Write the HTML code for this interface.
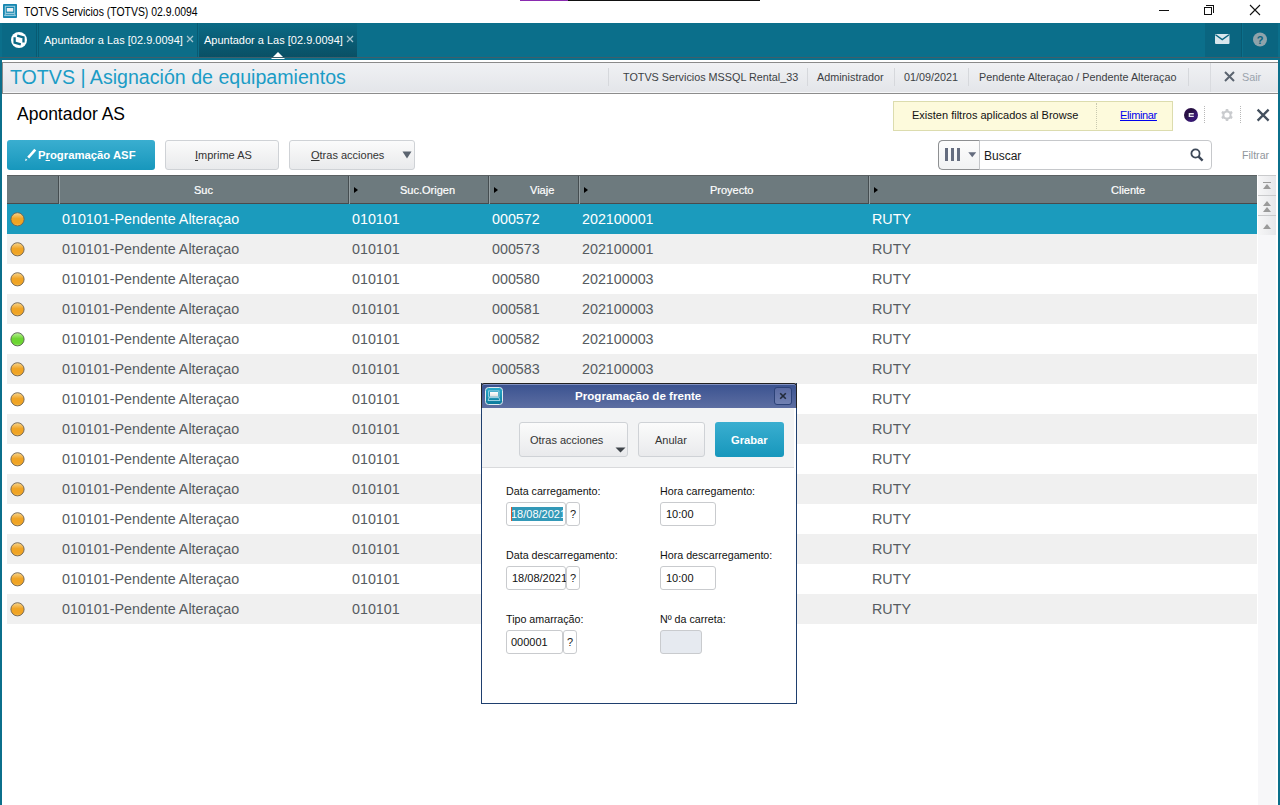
<!DOCTYPE html>
<html><head><meta charset="utf-8">
<style>
*{margin:0;padding:0;box-sizing:border-box}
html,body{width:1280px;height:805px;overflow:hidden;background:#fff;font-family:"Liberation Sans",sans-serif;position:relative}
.a{position:absolute}
.t{position:absolute;white-space:nowrap;line-height:1}
.sep{position:absolute;top:68px;width:1px;height:18px;background:#d6d8dc}
.row{position:absolute;left:7px;width:1250px;height:30px}
.rt{position:absolute;white-space:nowrap;line-height:1;font-size:14.3px;color:#565b60;top:8px}
.sel .rt{color:#fff}
.dot{position:absolute;left:3px;top:8px;width:15px;height:15px}
.hd{position:absolute;top:0;height:28px;border-left:1px solid #4f5a5e;box-shadow:inset 1px 0 0 #8a9599}
.ht{position:absolute;white-space:nowrap;line-height:1;font-size:11px;color:#fff;top:185px;-webkit-text-stroke:0.2px #fff}
.arr{position:absolute;top:187px;width:0;height:0;border-top:3.5px solid transparent;border-bottom:3.5px solid transparent;border-left:4.5px solid #000}
.btn{position:absolute;border:1px solid #cfd2d6;border-radius:3px;background:linear-gradient(#fbfbfb,#e9eaec)}
.lbl{position:absolute;white-space:nowrap;line-height:1;font-size:10.7px;color:#111}
.inp{position:absolute;height:24px;border:1px solid #c9cbce;border-radius:3px;background:#fff}
.q{position:absolute;height:24px;width:14px;border:1px solid #c9cbce;border-radius:3px;background:#fff;font-size:11px;line-height:23px;text-align:center;color:#222}
</style></head><body>

<div class="a" style="left:520px;top:0;width:48px;height:1px;background:#8a2bb0"></div>
<div class="a" style="left:568px;top:0;width:192px;height:1px;background:#111"></div>
<svg class="a" style="left:3px;top:4px" width="14" height="14"><rect x="0" y="0" width="14" height="14" rx="0.8" fill="#1787b0"/><rect x="2.3" y="2.3" width="9.4" height="7" fill="none" stroke="#9fcfe2" stroke-width="1"/><rect x="3.8" y="4" width="6.4" height="3.6" fill="#eef0f2"/><path d="M1.5 11.6 L2.6 9.8 H11.4 L12.5 11.6 Z" fill="none" stroke="#9fcfe2" stroke-width="1"/></svg>
<div class="t" style="left:24px;top:6px;font-size:12px;color:#000;transform:scaleX(0.87);transform-origin:0 0">TOTVS Servicios (TOTVS) 02.9.0094</div>
<div class="a" style="left:1159px;top:10px;width:10px;height:1px;background:#111"></div>
<div class="a" style="left:1204px;top:7px;width:8px;height:8px;border:1px solid #111;background:#fff"></div>
<div class="a" style="left:1206px;top:5px;width:8px;height:8px;border-top:1px solid #111;border-right:1px solid #111"></div>
<svg class="a" style="left:1249px;top:4px" width="12" height="12"><path d="M1 1L11 11M11 1L1 11" stroke="#111" stroke-width="1.1"/></svg>
<div class="a" style="left:0;top:23px;width:1280px;height:38px;background:#0b6f8b"></div>
<div class="a" style="left:0;top:23px;width:2px;height:782px;background:#0b6f8b"></div>
<div class="a" style="left:1278px;top:23px;width:2px;height:782px;background:#0b6f8b"></div>
<div class="a" style="left:2px;top:23px;width:35px;height:34px;background:#0a6985;border-right:1px solid #085a72"></div>
<svg class="a" style="left:0;top:0" width="40" height="60"><circle cx="19" cy="40" r="8" fill="#fff"/><path d="M14.6 37.3 L14.6 42.6 L20.8 44.3" fill="none" stroke="#0a6985" stroke-width="2.3"/><path d="M17.2 35.6 L23.5 37.3 L23.5 42.4" fill="none" stroke="#0a6985" stroke-width="2.3"/></svg>
<div class="a" style="left:38px;top:23px;width:160px;height:35px;background:#0c6d88;border-left:1px solid #085b73;border-right:1px solid #085b73;border-bottom:1px solid #085b73"></div>
<div class="t" style="left:44px;top:35px;font-size:11px;color:#fff">Apuntador a Las [02.9.0094]</div>
<svg class="a" style="left:186px;top:35px" width="8" height="8"><path d="M1 1L7 7M7 1L1 7" stroke="#a9c6d0" stroke-width="1.3"/></svg>
<div class="a" style="left:199px;top:23px;width:158px;height:35px;background:linear-gradient(#0b6a85,#094f64)"></div>
<div class="t" style="left:204px;top:35px;font-size:11px;color:#fff">Apuntador a Las [02.9.0094]</div>
<svg class="a" style="left:346px;top:35px" width="8" height="8"><path d="M1 1L7 7M7 1L1 7" stroke="#a9c6d0" stroke-width="1.3"/></svg>
<svg class="a" style="left:270px;top:51px" width="16" height="8"><path d="M1 8L8 1L15 8Z" fill="#fff"/></svg>
<div class="a" style="left:1205px;top:23px;width:37px;height:34px;background:#0a6580;border-right:1px solid #085a72"></div>
<div class="a" style="left:1243px;top:23px;width:35px;height:34px;background:#0a6580"></div>
<svg class="a" style="left:1215px;top:34px" width="16" height="12" viewBox="0 0 16 12"><rect x="0" y="0" width="14.5" height="10" rx="1" fill="#d9e6ec"/><path d="M0.5 0.8 L7.25 5.6 L14 0.8" fill="none" stroke="#0a6580" stroke-width="1.4"/></svg>
<svg class="a" style="left:1253px;top:32px" width="16" height="16" viewBox="0 0 16 16"><circle cx="7" cy="7.5" r="7" fill="#8fa3ab"/><text x="7" y="12" font-family="Liberation Sans" font-weight="bold" font-size="11" text-anchor="middle" fill="#0a6580">?</text></svg>
<div class="a" style="left:0;top:57px;width:1280px;height:1px;background:#3e5e6a"></div>
<div class="a" style="left:2px;top:60px;width:1276px;height:35px;background:#fff"></div>
<div class="a" style="left:2px;top:62px;width:1276px;height:32px;background:linear-gradient(#f0f1f4,#e3e5e9);border-top:1px solid #8a8a8a;border-left:1px solid #8a8a8a;border-bottom:1px solid #8c8c8c;box-shadow:inset 0 -1px 0 #f6f7f9"></div>
<div class="t" style="left:10px;top:68px;font-size:19.6px;color:#1b9cc6">TOTVS | Asignación de equipamientos</div>
<div class="a" style="left:1210px;top:63px;width:1px;height:29px;background:#d9dbdf"></div>
<div class="sep" style="left:608px"></div>
<div class="sep" style="left:807px"></div>
<div class="sep" style="left:894px"></div>
<div class="sep" style="left:968px"></div>
<div class="sep" style="left:1188px"></div>
<div class="t" style="left:623px;top:72px;font-size:10.8px;color:#3c3f44">TOTVS Servicios MSSQL Rental_33</div>
<div class="t" style="left:817px;top:72px;font-size:10.8px;color:#3c3f44">Administrador</div>
<div class="t" style="left:904px;top:72px;font-size:10.8px;color:#3c3f44">01/09/2021</div>
<div class="t" style="left:979px;top:72px;font-size:10.8px;color:#3c3f44">Pendente Alteraçao / Pendente Alteraçao</div>
<svg class="a" style="left:1224px;top:71px" width="11" height="11"><path d="M1 1L10 10M10 1L1 10" stroke="#5b6470" stroke-width="2"/></svg>
<div class="t" style="left:1242px;top:72px;font-size:10.8px;color:#9aa3ad">Sair</div>
<div class="t" style="left:17px;top:106px;font-size:17.5px;color:#000">Apontador AS</div>
<div class="a" style="left:893px;top:101px;width:280px;height:30px;background:#fdfadc;border:1px solid #dcdcae"></div>
<div class="a" style="left:1096px;top:103px;width:0;height:26px;border-left:1px dotted #c9c9b0"></div>
<div class="t" style="left:912px;top:110px;font-size:11px;color:#111">Existen filtros aplicados al Browse</div>
<div class="t" style="left:1120px;top:110px;font-size:11px;color:#0000ee;text-decoration:underline;letter-spacing:-0.35px">Eliminar</div>
<svg class="a" style="left:1183px;top:107px" width="16" height="16"><defs><linearGradient id="pg" x1="0" y1="0" x2="1" y2="1"><stop offset="0" stop-color="#3a0f5a"/><stop offset="0.35" stop-color="#24103e"/><stop offset="0.7" stop-color="#3a1878"/><stop offset="1" stop-color="#1a1050"/></linearGradient></defs><circle cx="8" cy="8" r="7" fill="url(#pg)"/><path d="M10.8 6.8H6.4V9.4H10.8" fill="none" stroke="#e8e8ec" stroke-width="1.4"/></svg>
<div class="a" style="left:1204px;top:106px;width:0;height:17px;border-left:1px dotted #b8b8b8"></div>
<div class="a" style="left:1240px;top:106px;width:0;height:17px;border-left:1px dotted #b8b8b8"></div>
<svg class="a" style="left:1220px;top:108px" width="14" height="14" viewBox="0 0 14 14"><g fill="#c9cbce"><circle cx="7" cy="7" r="4.6"/><rect x="5.6" y="1" width="2.8" height="12" rx="0.8"/><rect x="5.6" y="1" width="2.8" height="12" rx="0.8" transform="rotate(60 7 7)"/><rect x="5.6" y="1" width="2.8" height="12" rx="0.8" transform="rotate(-60 7 7)"/></g><circle cx="7" cy="7" r="2.6" fill="#fff"/></svg>
<svg class="a" style="left:1256px;top:108px" width="14" height="14"><path d="M1.6 1.6L12.6 12.6M12.6 1.6L1.6 12.6" stroke="#44505e" stroke-width="2.3"/></svg>
<div class="a" style="left:7px;top:140px;width:148px;height:30px;border-radius:3px;background:linear-gradient(#3aaed0,#1797bc)"></div>
<svg class="a" style="left:0;top:0" width="40" height="170"><path d="M35.3 149.6 L28.2 157.6" stroke="#fff" stroke-width="2.6"/><path d="M25 161 L25.8 158.6 L27.4 160.1 Z" fill="#fff"/></svg>
<div class="t" style="left:38px;top:150px;font-size:11.3px;font-weight:bold;color:#fff">P<u>r</u>ogramação ASF</div>
<div class="btn" style="left:165px;top:140px;width:114px;height:30px"></div>
<div class="t" style="left:195px;top:150px;font-size:11px;color:#333"><u>I</u>mprime AS</div>
<div class="btn" style="left:289px;top:140px;width:126px;height:30px"></div>
<div class="t" style="left:311px;top:150px;font-size:11px;color:#333"><u>O</u>tras acciones</div>
<svg class="a" style="left:402px;top:151px" width="10" height="8"><path d="M0.5 0.5H9.5L5 7.5Z" fill="#5b6470"/></svg>
<div class="a" style="left:938px;top:140px;width:274px;height:30px;border:1px solid #c6c8cb;border-radius:4px;background:#fff"></div>
<div class="a" style="left:938px;top:140px;width:42px;height:30px;border:1px solid #8e9092;border-right-color:#c4c6c9;border-radius:5px 0 0 5px;background:linear-gradient(#fdfdfd,#f1f2f3)"></div>
<div class="a" style="left:945px;top:148px;width:3px;height:13px;background:#646c7e"></div>
<div class="a" style="left:951px;top:148px;width:3px;height:13px;background:#666e80"></div>
<div class="a" style="left:957px;top:148px;width:3px;height:13px;background:#666e80"></div>
<svg class="a" style="left:968px;top:152px" width="9" height="6"><path d="M0.3 0.3H8.2L4.25 5.2Z" fill="#646c7e"/></svg>
<div class="t" style="left:984px;top:150px;font-size:12px;color:#1a1a1a">Buscar</div>
<svg class="a" style="left:1190px;top:148px" width="14" height="14" viewBox="0 0 14 14"><circle cx="5.5" cy="5.5" r="4.1" fill="none" stroke="#3d4858" stroke-width="1.8"/><path d="M8.6 8.6L12.6 12.6" stroke="#3d4858" stroke-width="2.4"/></svg>
<div class="t" style="left:1242px;top:150px;font-size:10.6px;color:#8f959c">Filtrar</div>
<div class="a" style="left:7px;top:175px;width:1250px;height:29px;background:#6d7a7e;border-top:1px solid #5a6062;border-bottom:1px solid #4a4a4c"></div>
<div class="a" style="left:58px;top:176px;width:1px;height:28px;background:#454d50"></div>
<div class="a" style="left:59px;top:176px;width:1px;height:28px;background:#97a1a4"></div>
<div class="a" style="left:348px;top:176px;width:1px;height:28px;background:#454d50"></div>
<div class="a" style="left:349px;top:176px;width:1px;height:28px;background:#97a1a4"></div>
<div class="a" style="left:488px;top:176px;width:1px;height:28px;background:#454d50"></div>
<div class="a" style="left:489px;top:176px;width:1px;height:28px;background:#97a1a4"></div>
<div class="a" style="left:578px;top:176px;width:1px;height:28px;background:#454d50"></div>
<div class="a" style="left:579px;top:176px;width:1px;height:28px;background:#97a1a4"></div>
<div class="a" style="left:868px;top:176px;width:1px;height:28px;background:#454d50"></div>
<div class="a" style="left:869px;top:176px;width:1px;height:28px;background:#97a1a4"></div>
<div class="arr" style="left:354px"></div>
<div class="arr" style="left:494px"></div>
<div class="arr" style="left:584px"></div>
<div class="arr" style="left:874px"></div>
<div class="ht" style="left:194px">Suc</div>
<div class="ht" style="left:400px">Suc.Origen</div>
<div class="ht" style="left:530px">Viaje</div>
<div class="ht" style="left:710px">Proyecto</div>
<div class="ht" style="left:1111px">Cliente</div>
<div class="a" style="left:1258px;top:175px;width:18px;height:630px;background:#f7f7f9"></div>
<div class="a" style="left:1258px;top:175px;width:18px;height:20px;background:linear-gradient(90deg,#f6f6f7,#e6e7ea);border-top:1px solid #c9cacc"></div>
<div class="a" style="left:1258px;top:195px;width:18px;height:20px;background:linear-gradient(90deg,#f6f6f7,#e6e7ea);border-top:1px solid #c9cacc"></div>
<div class="a" style="left:1258px;top:215px;width:18px;height:20px;background:linear-gradient(90deg,#f6f6f7,#e6e7ea);border-top:1px solid #c9cacc"></div>
<svg class="a" style="left:1263px;top:182px" width="10" height="10"><rect x="0" y="0" width="8" height="1" fill="#9a9a9a"/><path d="M0 7H8L4 2Z" fill="#9a9a9a"/></svg>
<svg class="a" style="left:1263px;top:200px" width="10" height="13"><path d="M0 6H8L4 1Z M0 12H8L4 7Z" fill="#9a9a9a"/></svg>
<svg class="a" style="left:1263px;top:223px" width="10" height="8"><path d="M0 6H8L4 1Z" fill="#9a9a9a"/></svg>
<div class="row sel" style="top:204px;background:#1b9bbd">
<svg class="dot" viewBox="0 0 15 15"><defs><linearGradient id="dg0" x1="0" y1="0" x2="0" y2="1"><stop offset="0" stop-color="#f7d690"/><stop offset="0.45" stop-color="#f0a424"/><stop offset="0.8" stop-color="#f0a424"/><stop offset="1" stop-color="#f3b850"/></linearGradient></defs><circle cx="7.5" cy="7.3" r="6.6" fill="url(#dg0)" stroke="#6f6350" stroke-width="0.9"/></svg>
<div class="rt" style="left:55px">010101-Pendente Alteraçao</div>
<div class="rt" style="left:345px">010101</div>
<div class="rt" style="left:485px">000572</div>
<div class="rt" style="left:575px">202100001</div>
<div class="rt" style="left:865px">RUTY</div>
</div>
<div class="row" style="top:234px;background:#f0f0f0">
<svg class="dot" viewBox="0 0 15 15"><defs><linearGradient id="dg1" x1="0" y1="0" x2="0" y2="1"><stop offset="0" stop-color="#f7d690"/><stop offset="0.45" stop-color="#f0a424"/><stop offset="0.8" stop-color="#f0a424"/><stop offset="1" stop-color="#f3b850"/></linearGradient></defs><circle cx="7.5" cy="7.3" r="6.6" fill="url(#dg1)" stroke="#6f6350" stroke-width="0.9"/></svg>
<div class="rt" style="left:55px">010101-Pendente Alteraçao</div>
<div class="rt" style="left:345px">010101</div>
<div class="rt" style="left:485px">000573</div>
<div class="rt" style="left:575px">202100001</div>
<div class="rt" style="left:865px">RUTY</div>
</div>
<div class="row" style="top:264px;background:#ffffff">
<svg class="dot" viewBox="0 0 15 15"><defs><linearGradient id="dg2" x1="0" y1="0" x2="0" y2="1"><stop offset="0" stop-color="#f7d690"/><stop offset="0.45" stop-color="#f0a424"/><stop offset="0.8" stop-color="#f0a424"/><stop offset="1" stop-color="#f3b850"/></linearGradient></defs><circle cx="7.5" cy="7.3" r="6.6" fill="url(#dg2)" stroke="#6f6350" stroke-width="0.9"/></svg>
<div class="rt" style="left:55px">010101-Pendente Alteraçao</div>
<div class="rt" style="left:345px">010101</div>
<div class="rt" style="left:485px">000580</div>
<div class="rt" style="left:575px">202100003</div>
<div class="rt" style="left:865px">RUTY</div>
</div>
<div class="row" style="top:294px;background:#f0f0f0">
<svg class="dot" viewBox="0 0 15 15"><defs><linearGradient id="dg3" x1="0" y1="0" x2="0" y2="1"><stop offset="0" stop-color="#f7d690"/><stop offset="0.45" stop-color="#f0a424"/><stop offset="0.8" stop-color="#f0a424"/><stop offset="1" stop-color="#f3b850"/></linearGradient></defs><circle cx="7.5" cy="7.3" r="6.6" fill="url(#dg3)" stroke="#6f6350" stroke-width="0.9"/></svg>
<div class="rt" style="left:55px">010101-Pendente Alteraçao</div>
<div class="rt" style="left:345px">010101</div>
<div class="rt" style="left:485px">000581</div>
<div class="rt" style="left:575px">202100003</div>
<div class="rt" style="left:865px">RUTY</div>
</div>
<div class="row" style="top:324px;background:#ffffff">
<svg class="dot" viewBox="0 0 15 15"><defs><linearGradient id="dg4" x1="0" y1="0" x2="0" y2="1"><stop offset="0" stop-color="#bdf09a"/><stop offset="0.45" stop-color="#6cd632"/><stop offset="0.8" stop-color="#6cd632"/><stop offset="1" stop-color="#9be870"/></linearGradient></defs><circle cx="7.5" cy="7.3" r="6.6" fill="url(#dg4)" stroke="#55604f" stroke-width="0.9"/></svg>
<div class="rt" style="left:55px">010101-Pendente Alteraçao</div>
<div class="rt" style="left:345px">010101</div>
<div class="rt" style="left:485px">000582</div>
<div class="rt" style="left:575px">202100003</div>
<div class="rt" style="left:865px">RUTY</div>
</div>
<div class="row" style="top:354px;background:#f0f0f0">
<svg class="dot" viewBox="0 0 15 15"><defs><linearGradient id="dg5" x1="0" y1="0" x2="0" y2="1"><stop offset="0" stop-color="#f7d690"/><stop offset="0.45" stop-color="#f0a424"/><stop offset="0.8" stop-color="#f0a424"/><stop offset="1" stop-color="#f3b850"/></linearGradient></defs><circle cx="7.5" cy="7.3" r="6.6" fill="url(#dg5)" stroke="#6f6350" stroke-width="0.9"/></svg>
<div class="rt" style="left:55px">010101-Pendente Alteraçao</div>
<div class="rt" style="left:345px">010101</div>
<div class="rt" style="left:485px">000583</div>
<div class="rt" style="left:575px">202100003</div>
<div class="rt" style="left:865px">RUTY</div>
</div>
<div class="row" style="top:384px;background:#ffffff">
<svg class="dot" viewBox="0 0 15 15"><defs><linearGradient id="dg6" x1="0" y1="0" x2="0" y2="1"><stop offset="0" stop-color="#f7d690"/><stop offset="0.45" stop-color="#f0a424"/><stop offset="0.8" stop-color="#f0a424"/><stop offset="1" stop-color="#f3b850"/></linearGradient></defs><circle cx="7.5" cy="7.3" r="6.6" fill="url(#dg6)" stroke="#6f6350" stroke-width="0.9"/></svg>
<div class="rt" style="left:55px">010101-Pendente Alteraçao</div>
<div class="rt" style="left:345px">010101</div>
<div class="rt" style="left:865px">RUTY</div>
</div>
<div class="row" style="top:414px;background:#f0f0f0">
<svg class="dot" viewBox="0 0 15 15"><defs><linearGradient id="dg7" x1="0" y1="0" x2="0" y2="1"><stop offset="0" stop-color="#f7d690"/><stop offset="0.45" stop-color="#f0a424"/><stop offset="0.8" stop-color="#f0a424"/><stop offset="1" stop-color="#f3b850"/></linearGradient></defs><circle cx="7.5" cy="7.3" r="6.6" fill="url(#dg7)" stroke="#6f6350" stroke-width="0.9"/></svg>
<div class="rt" style="left:55px">010101-Pendente Alteraçao</div>
<div class="rt" style="left:345px">010101</div>
<div class="rt" style="left:865px">RUTY</div>
</div>
<div class="row" style="top:444px;background:#ffffff">
<svg class="dot" viewBox="0 0 15 15"><defs><linearGradient id="dg8" x1="0" y1="0" x2="0" y2="1"><stop offset="0" stop-color="#f7d690"/><stop offset="0.45" stop-color="#f0a424"/><stop offset="0.8" stop-color="#f0a424"/><stop offset="1" stop-color="#f3b850"/></linearGradient></defs><circle cx="7.5" cy="7.3" r="6.6" fill="url(#dg8)" stroke="#6f6350" stroke-width="0.9"/></svg>
<div class="rt" style="left:55px">010101-Pendente Alteraçao</div>
<div class="rt" style="left:345px">010101</div>
<div class="rt" style="left:865px">RUTY</div>
</div>
<div class="row" style="top:474px;background:#f0f0f0">
<svg class="dot" viewBox="0 0 15 15"><defs><linearGradient id="dg9" x1="0" y1="0" x2="0" y2="1"><stop offset="0" stop-color="#f7d690"/><stop offset="0.45" stop-color="#f0a424"/><stop offset="0.8" stop-color="#f0a424"/><stop offset="1" stop-color="#f3b850"/></linearGradient></defs><circle cx="7.5" cy="7.3" r="6.6" fill="url(#dg9)" stroke="#6f6350" stroke-width="0.9"/></svg>
<div class="rt" style="left:55px">010101-Pendente Alteraçao</div>
<div class="rt" style="left:345px">010101</div>
<div class="rt" style="left:865px">RUTY</div>
</div>
<div class="row" style="top:504px;background:#ffffff">
<svg class="dot" viewBox="0 0 15 15"><defs><linearGradient id="dg10" x1="0" y1="0" x2="0" y2="1"><stop offset="0" stop-color="#f7d690"/><stop offset="0.45" stop-color="#f0a424"/><stop offset="0.8" stop-color="#f0a424"/><stop offset="1" stop-color="#f3b850"/></linearGradient></defs><circle cx="7.5" cy="7.3" r="6.6" fill="url(#dg10)" stroke="#6f6350" stroke-width="0.9"/></svg>
<div class="rt" style="left:55px">010101-Pendente Alteraçao</div>
<div class="rt" style="left:345px">010101</div>
<div class="rt" style="left:865px">RUTY</div>
</div>
<div class="row" style="top:534px;background:#f0f0f0">
<svg class="dot" viewBox="0 0 15 15"><defs><linearGradient id="dg11" x1="0" y1="0" x2="0" y2="1"><stop offset="0" stop-color="#f7d690"/><stop offset="0.45" stop-color="#f0a424"/><stop offset="0.8" stop-color="#f0a424"/><stop offset="1" stop-color="#f3b850"/></linearGradient></defs><circle cx="7.5" cy="7.3" r="6.6" fill="url(#dg11)" stroke="#6f6350" stroke-width="0.9"/></svg>
<div class="rt" style="left:55px">010101-Pendente Alteraçao</div>
<div class="rt" style="left:345px">010101</div>
<div class="rt" style="left:865px">RUTY</div>
</div>
<div class="row" style="top:564px;background:#ffffff">
<svg class="dot" viewBox="0 0 15 15"><defs><linearGradient id="dg12" x1="0" y1="0" x2="0" y2="1"><stop offset="0" stop-color="#f7d690"/><stop offset="0.45" stop-color="#f0a424"/><stop offset="0.8" stop-color="#f0a424"/><stop offset="1" stop-color="#f3b850"/></linearGradient></defs><circle cx="7.5" cy="7.3" r="6.6" fill="url(#dg12)" stroke="#6f6350" stroke-width="0.9"/></svg>
<div class="rt" style="left:55px">010101-Pendente Alteraçao</div>
<div class="rt" style="left:345px">010101</div>
<div class="rt" style="left:865px">RUTY</div>
</div>
<div class="row" style="top:594px;background:#f0f0f0">
<svg class="dot" viewBox="0 0 15 15"><defs><linearGradient id="dg13" x1="0" y1="0" x2="0" y2="1"><stop offset="0" stop-color="#f7d690"/><stop offset="0.45" stop-color="#f0a424"/><stop offset="0.8" stop-color="#f0a424"/><stop offset="1" stop-color="#f3b850"/></linearGradient></defs><circle cx="7.5" cy="7.3" r="6.6" fill="url(#dg13)" stroke="#6f6350" stroke-width="0.9"/></svg>
<div class="rt" style="left:55px">010101-Pendente Alteraçao</div>
<div class="rt" style="left:345px">010101</div>
<div class="rt" style="left:865px">RUTY</div>
</div>
<div class="a" style="left:481px;top:383px;width:316px;height:321px;background:#fff;border:1px solid #1f3f6e;border-top:none"></div>
<div class="a" style="left:481px;top:383px;width:316px;height:25px;background:linear-gradient(#3a5290,#5d6ea2);border-top:1px solid #222;border-left:1px solid #222;border-right:1px solid #222;border-radius:3px 3px 0 0;box-shadow:inset 0 1px 0 #8190c0"></div>
<svg class="a" style="left:485px;top:387px" width="18" height="18"><defs><linearGradient id="ig" x1="0" y1="0" x2="0" y2="1"><stop offset="0" stop-color="#2aaacb"/><stop offset="1" stop-color="#0c7a9c"/></linearGradient><linearGradient id="sg" x1="0" y1="0" x2="0" y2="1"><stop offset="0" stop-color="#fff"/><stop offset="1" stop-color="#e0e0e0"/></linearGradient></defs><rect x="0.5" y="0.5" width="17" height="17" rx="3" fill="url(#ig)" stroke="#e3ebef" stroke-width="1"/><rect x="3.6" y="3.9" width="10.4" height="6.1" fill="none" stroke="#9fd2e4" stroke-width="0.9"/><rect x="5" y="5" width="8" height="4.6" fill="url(#sg)"/><path d="M3 13.5 L4.2 10.6 H13.8 L15 13.5 Z" fill="none" stroke="#a9d8e8" stroke-width="0.9"/></svg>
<div class="t" style="left:575px;top:390px;font-size:11.6px;font-weight:bold;color:#fff">Programação de frente</div>
<div class="a" style="left:774px;top:387px;width:18px;height:18px;border-radius:3px;background:linear-gradient(#5a6aa2,#7181b2);border:1px solid #2c4278"></div>
<svg class="a" style="left:779px;top:392px" width="8" height="8"><path d="M1.2 1.2L6.8 6.8M6.8 1.2L1.2 6.8" stroke="#222a3a" stroke-width="1.6"/></svg>
<div class="a" style="left:482px;top:408px;width:312px;height:60px;background:#f2f3f4;border-bottom:1px solid #d9dadc"></div>
<div class="btn" style="left:519px;top:422px;width:109px;height:35px"></div>
<div class="t" style="left:530px;top:435px;font-size:11px;color:#333">Otras acciones</div>
<svg class="a" style="left:615px;top:447px" width="11" height="6"><path d="M0.5 0.5H10.5L5.5 5.5Z" fill="#3f444a"/></svg>
<div class="btn" style="left:638px;top:422px;width:67px;height:35px"></div>
<div class="t" style="left:655px;top:435px;font-size:11px;color:#333">Anular</div>
<div class="a" style="left:715px;top:422px;width:69px;height:35px;border-radius:3px;background:linear-gradient(#3aaed0,#1797bc)"></div>
<div class="t" style="left:731px;top:435px;font-size:11.2px;font-weight:bold;color:#fff">Grabar</div>
<div class="lbl" style="left:506px;top:486px">Data carregamento:</div>
<div class="lbl" style="left:660px;top:486px">Hora carregamento:</div>
<div class="lbl" style="left:506px;top:550px">Data descarregamento:</div>
<div class="lbl" style="left:660px;top:550px">Hora descarregamento:</div>
<div class="lbl" style="left:506px;top:614px">Tipo amarração:</div>
<div class="lbl" style="left:660px;top:614px">Nº da carreta:</div>
<div class="inp" style="left:506px;top:502px;width:60px"></div>
<div class="a" style="left:511px;top:507px;width:52px;height:14px;background:#3399b8;overflow:hidden"><div class="t" style="left:0;top:2px;font-size:11px;color:#fff">18/08/2021</div></div>
<div class="a" style="left:511px;top:507px;width:1px;height:14px;background:#d9542b"></div>
<div class="q" style="left:566px;top:502px">?</div>
<div class="inp" style="left:660px;top:502px;width:56px"><div class="t" style="left:5px;top:6px;font-size:11px;color:#111">10:00</div></div>
<div class="inp" style="left:506px;top:566px;width:60px"><div class="t" style="left:5px;top:6px;font-size:11px;color:#111">18/08/2021</div></div>
<div class="q" style="left:566px;top:566px">?</div>
<div class="inp" style="left:660px;top:566px;width:56px"><div class="t" style="left:5px;top:6px;font-size:11px;color:#111">10:00</div></div>
<div class="inp" style="left:506px;top:630px;width:57px"><div class="t" style="left:4px;top:6px;font-size:11px;color:#111">000001</div></div>
<div class="q" style="left:563px;top:630px">?</div>
<div class="inp" style="left:660px;top:630px;width:42px;background:#e6eaf0"></div>
</body></html>
